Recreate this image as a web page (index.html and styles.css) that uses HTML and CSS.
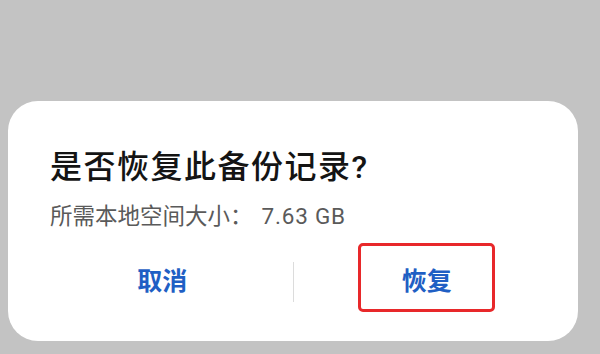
FILE: index.html
```html
<!DOCTYPE html>
<html lang="zh-CN">
<head>
    <meta charset="UTF-8">
    <meta name="viewport" content="width=device-width, initial-scale=1.0">
    <title>恢复备份</title>
    <link rel="stylesheet" href="styles.css">
</head>
<body>
    <div class="dialog">
        <div class="title">是否恢复此备份记录?</div>
        <div class="info">所需本地空间大小：<span class="size">7.63 GB</span></div>
        <div class="actions">
            <div class="action">
                <button class="btn">取消</button>
            </div>
            <div class="divider"></div>
            <div class="action">
                <button class="btn marked">恢复</button>
            </div>
        </div>
    </div>
</body>
</html>
```

FILE: styles.css
```css
body {
    margin: 0;
    height: 354px;
    overflow: hidden;
    background-color: #c3c3c3; /* fundo cinza da tela */
    font-family: Roboto, "Noto Sans CJK SC", sans-serif;
}
.dialog {
    box-sizing: border-box;
    width: 570px;
    height: 240px;
    margin: 101px 0 0 8px;
    padding: 46px 24px 0;
    background-color: #ffffff;
    border-radius: 30px;
}
.title {
    padding-left: 18px;
    font-size: 32px;
    line-height: 40px;
    font-weight: 500;
    color: #141414;
    letter-spacing: 1.5px;
}
.info {
    margin-top: 14px;
    padding-left: 18px;
    font-size: 22.5px;
    line-height: 30px;
    color: #5a5a5a;
}
.size {
    margin-left: 9px;
    letter-spacing: 0.8px;
}
.actions {
    display: flex;
    align-items: center;
    margin-top: 12px;
    height: 69px;
}
.action {
    flex: 1;
    display: flex;
    justify-content: center;
}
.divider {
    width: 1px;
    height: 40px;
    margin-top: 8px;
    background-color: #dcdcdc;
}
.btn {
    box-sizing: border-box;
    width: 137px;
    height: 69px;
    padding: 2px 0 0;
    border: 3px solid transparent;
    border-radius: 5px;
    background: none;
    font-family: inherit;
    font-size: 25px;
    font-weight: 700;
    color: #1f5fc4;
    cursor: pointer;
}
.marked {
    border-color: #e8282a; /* destaque vermelho */
    margin-left: 6px;
}
```
